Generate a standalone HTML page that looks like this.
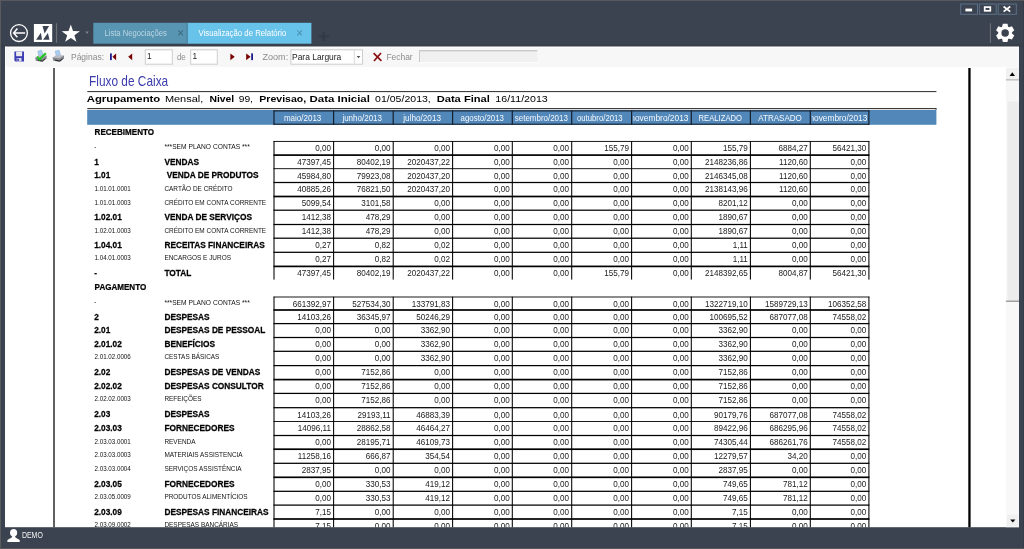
<!DOCTYPE html>
<html lang="pt-BR"><head><meta charset="utf-8"><title>Visualização de Relatório - Fluxo de Caixa</title>
<style>html,body{margin:0;padding:0;background:#3c4350;overflow:hidden}svg{display:block;will-change:transform}text{white-space:pre}</style></head>
<body>
<svg width="1024" height="549" viewBox="0 0 1024 549" font-family="'Liberation Sans', Arial, sans-serif">
<rect x="0.00" y="0.00" width="1024.00" height="549.00" fill="#3c4350" />
<rect x="0.00" y="0.00" width="1024.00" height="1.00" fill="#56585b" />
<rect x="0.00" y="0.00" width="1.00" height="549.00" fill="#5a5b5d" />
<rect x="0.00" y="548.00" width="1024.00" height="1.00" fill="#56585b" />
<rect x="1023.00" y="1.00" width="1.00" height="547.00" fill="#363c47" />
<g id="titlebar">
<circle cx="18.95" cy="33.1" r="8.4" fill="none" stroke="#fff" stroke-width="1.3"/>
<path d="M25.1 32.9H14.2M17.4 28.6L13.6 32.9L17.4 37.2" fill="none" stroke="#fff" stroke-width="1.5"/>
<rect x="33.90" y="24.00" width="18.30" height="18.00" fill="#fff" />
<path d="M42.5 26.1H49.1L44.6 33.6ZM36.1 39.8H42L40.9 32.8ZM43.1 39.8H49.5L47.9 33.1Z" fill="#3c4350"/>
<rect x="55.90" y="23.30" width="1.20" height="19.40" fill="#6b7079" />
<polygon points="70.80,24.50 73.03,31.03 79.93,31.13 74.41,35.27 76.44,41.87 70.80,37.90 65.16,41.87 67.19,35.27 61.67,31.13 68.57,31.03" fill="#fff"/>
<path d="M85.2 31.6H88.9L87.05 33.9Z" fill="#7d838d"/>
<rect x="93.30" y="22.80" width="94.50" height="20.90" fill="#5795b2" />
<rect x="187.80" y="22.80" width="123.60" height="20.90" fill="#68c3ea" />
<rect x="186.20" y="22.80" width="1.60" height="20.90" fill="#4f89a5" />
<text x="104.50" y="36.30" textLength="62.30" lengthAdjust="spacingAndGlyphs" font-size="8.5" fill="#bcd6e3">Lista Negociações</text>
<text x="198.60" y="36.30" textLength="87.70" lengthAdjust="spacingAndGlyphs" font-size="8.5" fill="#fff">Visualização de Relatório</text>
<path d="M178.3 30.4L182.9 35.3M182.9 30.4L178.3 35.3" stroke="#3f6d83" stroke-width="1.1" fill="none"/>
<path d="M297.3 30.4L301.9 35.3M301.9 30.4L297.3 35.3" stroke="#4a94b5" stroke-width="1.1" fill="none"/>
<path d="M323.7 31.6V41.2M318.6 36.4H328.9" stroke="#323a47" stroke-width="2.4" fill="none"/>
<rect x="960.70" y="4" width="16.80" height="10.3" fill="none" stroke="#5b7188" stroke-width="1"/>
<rect x="979.40" y="4" width="16.80" height="10.3" fill="none" stroke="#5b7188" stroke-width="1"/>
<rect x="998.20" y="4" width="18.10" height="10.3" fill="none" stroke="#5b7188" stroke-width="1"/>
<rect x="965.40" y="8.60" width="6.70" height="2.80" fill="#fff" />
<rect x="984.7" y="7.1" width="5.6" height="3.7" fill="none" stroke="#fff" stroke-width="1.7"/>
<path d="M1003.6 6.5L1010.2 11.6M1010.2 6.5L1003.6 11.6" stroke="#fff" stroke-width="1.7" fill="none"/>
<rect x="989.90" y="23.20" width="1.00" height="19.70" fill="#70757c" />
<g transform="translate(1005.15 32.9)">
<circle r="5.3" fill="none" stroke="#fff" stroke-width="3.1"/>
<path d="M-3.1 -5.6L-2.3 -9.15H2.3L3.1 -5.6Z" fill="#fff" transform="rotate(0)"/>
<path d="M-3.1 -5.6L-2.3 -9.15H2.3L3.1 -5.6Z" fill="#fff" transform="rotate(60)"/>
<path d="M-3.1 -5.6L-2.3 -9.15H2.3L3.1 -5.6Z" fill="#fff" transform="rotate(120)"/>
<path d="M-3.1 -5.6L-2.3 -9.15H2.3L3.1 -5.6Z" fill="#fff" transform="rotate(180)"/>
<path d="M-3.1 -5.6L-2.3 -9.15H2.3L3.1 -5.6Z" fill="#fff" transform="rotate(240)"/>
<path d="M-3.1 -5.6L-2.3 -9.15H2.3L3.1 -5.6Z" fill="#fff" transform="rotate(300)"/>
</g>
</g>
<g id="toolbar">
<rect x="1.00" y="44.40" width="1022.00" height="2.40" fill="#383f4a" />
<rect x="5.00" y="46.70" width="1014.00" height="20.30" fill="#f7f7f7" />
<rect x="5.00" y="46.70" width="1014.00" height="1.10" fill="#fefefe" />
<rect x="5.00" y="46.70" width="0.90" height="20.30" fill="#fefefe" />
<g transform="translate(14.1 51)">
<path d="M0.3 0.6H9.9V10.4H1.3L0.3 9.4Z" fill="#3c3cb4"/>
<rect x="2" y="0.6" width="6" height="4.6" fill="#e9e9ee"/>
<rect x="2.6" y="7" width="4.8" height="3.4" fill="#d8d8e8"/>
<rect x="3.2" y="7.6" width="1.5" height="2.4" fill="#3c3cb4"/>
</g>
<g transform="translate(34.6 50)">
<path d="M3.2 1.2L7 0.2L8.6 5.6L4.4 6.6Z" fill="#a9cdf0" stroke="#7da7d4" stroke-width="0.5"/>
<path d="M0.6 7.6L4 5.2L11.6 5.2L12 8.4L8 11.8L1.4 10.8Z" fill="#b9bcc2"/>
<path d="M0.6 7.6L7.4 8.6L12 5.6L12 8.4L8 11.8L1.4 10.8Z" fill="#83868c"/>
<path d="M3 10.2L7.8 11L10.6 8.8" stroke="#2a2a2a" stroke-width="1" fill="none"/>
<path d="M2.6 6.6L5 9.4L11.2 3.2" stroke="#22c322" stroke-width="2.2" fill="none"/>
</g>
<g transform="translate(52.0 50)">
<path d="M3.2 1.2L7 0.2L8.6 5.6L4.4 6.6Z" fill="#a9cdf0" stroke="#7da7d4" stroke-width="0.5"/>
<path d="M0.6 7.6L4 5.2L11.6 5.2L12 8.4L8 11.8L1.4 10.8Z" fill="#b9bcc2"/>
<path d="M0.6 7.6L7.4 8.6L12 5.6L12 8.4L8 11.8L1.4 10.8Z" fill="#83868c"/>
<path d="M3 10.2L7.8 11L10.6 8.8" stroke="#2a2a2a" stroke-width="1" fill="none"/>
</g>
<text x="71.00" y="60.20" textLength="33.00" lengthAdjust="spacingAndGlyphs" font-size="9" fill="#8c8c8c">Páginas:</text>
<rect x="110.00" y="53.40" width="1.80" height="6.70" fill="#1c1c8c" />
<path d="M112.4 56.8L116.1 53.4V60.2Z" fill="#7a0000"/>
<path d="M128.2 56.8L132.2 53.4V60.2Z" fill="#7a0000"/>
<rect x="145.30" y="49.8" width="27.00" height="14.4" fill="#fff" stroke="#cdcdcd" stroke-width="1"/>
<text transform="translate(147.00 59.40) scale(0.9 1)" font-size="9.2" fill="#222">1</text>
<text x="176.90" y="60.20" textLength="8.80" lengthAdjust="spacingAndGlyphs" font-size="9" fill="#8c8c8c">de</text>
<rect x="190.70" y="49.8" width="26.60" height="14.4" fill="#fff" stroke="#cdcdcd" stroke-width="1"/>
<text transform="translate(192.40 59.40) scale(0.9 1)" font-size="9.2" fill="#222">1</text>
<path d="M234.7 56.8L230.4 53.4V60.2Z" fill="#7a0000"/>
<path d="M250.6 56.8L246.2 53.4V60.2Z" fill="#7a0000"/>
<rect x="251.20" y="53.40" width="1.80" height="6.70" fill="#1c1c8c" />
<text x="262.40" y="60.20" textLength="25.80" lengthAdjust="spacingAndGlyphs" font-size="9" fill="#8c8c8c">Zoom:</text>
<rect x="290.9" y="49.8" width="71.6" height="14.4" fill="#fff" stroke="#cdcdcd" stroke-width="1"/>
<rect x="353.80" y="50.30" width="0.80" height="13.40" fill="#d0d0d0" />
<path d="M356.6 55.9H360.4L358.5 58.2Z" fill="#555"/>
<text x="292.00" y="59.80" textLength="49.30" lengthAdjust="spacingAndGlyphs" font-size="9" fill="#222">Para Largura</text>
<path d="M373.6 53.2L381.4 60.8M381 53L374 61" stroke="#8a1010" stroke-width="1.7" fill="none"/>
<text x="386.40" y="60.20" textLength="26.30" lengthAdjust="spacingAndGlyphs" font-size="9" fill="#8c8c8c">Fechar</text>
<rect x="419.00" y="50.20" width="118.30" height="12.10" fill="#f0f0f0" />
<rect x="419.00" y="50.00" width="118.30" height="1.40" fill="#c9c9c9" />
<rect x="419.00" y="50.00" width="1.00" height="12.30" fill="#c9c9c9" />
<rect x="419.00" y="62.30" width="119.00" height="0.90" fill="#fff" />
</g>
<g id="report">
<rect x="5.00" y="67.00" width="1014.00" height="460.20" fill="#fff" />
<clipPath id="cc"><rect x="5" y="67" width="1001" height="460.2"/></clipPath>
<g clip-path="url(#cc)">
<rect x="53.20" y="68.00" width="1.60" height="460.00" fill="#3a3a3a"/>
<rect x="968.30" y="68.00" width="2.30" height="460.00" fill="#000"/>
<text x="89.00" y="85.80" textLength="79.20" lengthAdjust="spacingAndGlyphs" font-size="14.6" fill="#3c3cae">Fluxo de Caixa</text>
<rect x="87.30" y="91.10" width="849.10" height="1.00" fill="#2a2a2a"/>
<text x="86.80" y="102.10" textLength="73.40" lengthAdjust="spacingAndGlyphs" font-size="9.6" fill="#000" font-weight="bold">Agrupamento</text>
<text x="164.90" y="102.10" textLength="38.40" lengthAdjust="spacingAndGlyphs" font-size="9.6" fill="#000">Mensal,</text>
<text x="209.40" y="102.10" textLength="24.80" lengthAdjust="spacingAndGlyphs" font-size="9.6" fill="#000" font-weight="bold">Nivel</text>
<text x="238.70" y="102.10" textLength="14.30" lengthAdjust="spacingAndGlyphs" font-size="9.6" fill="#000">99,</text>
<text x="259.30" y="102.10" textLength="46.90" lengthAdjust="spacingAndGlyphs" font-size="9.6" fill="#000" font-weight="bold">Previsao,</text>
<text x="309.60" y="102.10" textLength="60.30" lengthAdjust="spacingAndGlyphs" font-size="9.6" fill="#000" font-weight="bold">Data Inicial</text>
<text x="375.10" y="102.10" textLength="55.70" lengthAdjust="spacingAndGlyphs" font-size="9.6" fill="#000">01/05/2013,</text>
<text x="436.70" y="102.10" textLength="53.20" lengthAdjust="spacingAndGlyphs" font-size="9.6" fill="#000" font-weight="bold">Data Final</text>
<text x="495.30" y="102.10" textLength="52.50" lengthAdjust="spacingAndGlyphs" font-size="9.6" fill="#000">16/11/2013</text>
<rect x="87.30" y="108.05" width="849.10" height="1.10" fill="#333"/>
<rect x="935.60" y="108.10" width="0.80" height="1.90" fill="#333" />
<rect x="87.20" y="110.00" width="849.20" height="14.80" fill="#5287b9" />
<text x="283.90" y="121.40" textLength="37.40" lengthAdjust="spacingAndGlyphs" font-size="9" fill="#f6f9fc">maio/2013</text>
<text x="342.40" y="121.40" textLength="39.60" lengthAdjust="spacingAndGlyphs" font-size="9" fill="#f6f9fc">junho/2013</text>
<text x="403.30" y="121.40" textLength="37.70" lengthAdjust="spacingAndGlyphs" font-size="9" fill="#f6f9fc">julho/2013</text>
<text x="460.50" y="121.40" textLength="43.50" lengthAdjust="spacingAndGlyphs" font-size="9" fill="#f6f9fc">agosto/2013</text>
<text x="514.80" y="121.40" textLength="53.10" lengthAdjust="spacingAndGlyphs" font-size="9" fill="#f6f9fc">setembro/2013</text>
<text x="577.00" y="121.40" textLength="45.60" lengthAdjust="spacingAndGlyphs" font-size="9" fill="#f6f9fc">outubro/2013</text>
<clipPath id="h6"><rect x="633.10" y="110" width="57.40" height="15"/></clipPath>
<g clip-path="url(#h6)">
<text x="630.30" y="121.40" textLength="58.20" lengthAdjust="spacingAndGlyphs" font-size="9" fill="#f6f9fc">novembro/2013</text>
</g>
<text x="698.60" y="121.40" textLength="43.40" lengthAdjust="spacingAndGlyphs" font-size="9" fill="#f6f9fc">REALIZADO</text>
<text x="758.20" y="121.40" textLength="43.70" lengthAdjust="spacingAndGlyphs" font-size="9" fill="#f6f9fc">ATRASADO</text>
<clipPath id="h9"><rect x="811.80" y="110" width="56.30" height="15"/></clipPath>
<g clip-path="url(#h9)">
<text x="809.40" y="121.40" textLength="57.90" lengthAdjust="spacingAndGlyphs" font-size="9" fill="#f6f9fc">novembro/2013</text>
</g>
<rect x="273.50" y="110.35" width="595.90" height="1.10" fill="#15202e"/>
<rect x="273.50" y="123.65" width="595.90" height="1.10" fill="#15202e"/>
<rect x="273.40" y="110.40" width="1.20" height="14.30" fill="#15202e"/>
<rect x="333.00" y="110.40" width="1.20" height="14.30" fill="#15202e"/>
<rect x="392.60" y="110.40" width="1.20" height="14.30" fill="#15202e"/>
<rect x="452.00" y="110.40" width="1.20" height="14.30" fill="#15202e"/>
<rect x="511.70" y="110.40" width="1.20" height="14.30" fill="#15202e"/>
<rect x="571.10" y="110.40" width="1.20" height="14.30" fill="#15202e"/>
<rect x="631.00" y="110.40" width="1.20" height="14.30" fill="#15202e"/>
<rect x="690.70" y="110.40" width="1.20" height="14.30" fill="#15202e"/>
<rect x="749.80" y="110.40" width="1.20" height="14.30" fill="#15202e"/>
<rect x="809.70" y="110.40" width="1.20" height="14.30" fill="#15202e"/>
<rect x="868.30" y="110.40" width="1.20" height="14.30" fill="#15202e"/>
<text transform="translate(94.60 135.10) scale(0.85 1)" font-size="9.5" fill="#000" font-weight="bold" stroke="#000" stroke-width="0.25">RECEBIMENTO</text>
<text transform="translate(94.20 148.70) scale(0.83 1)" font-size="7.5" fill="#111">-</text>
<text x="164.40" y="149.20" textLength="85.40" lengthAdjust="spacingAndGlyphs" font-size="7.5" fill="#111">***SEM PLANO CONTAS ***</text>
<text transform="translate(331.00 151.20) scale(0.9 1)" font-size="9" fill="#1a1a1a" text-anchor="end">0,00</text>
<text transform="translate(390.60 151.20) scale(0.9 1)" font-size="9" fill="#1a1a1a" text-anchor="end">0,00</text>
<text transform="translate(450.00 151.20) scale(0.9 1)" font-size="9" fill="#1a1a1a" text-anchor="end">0,00</text>
<text transform="translate(509.70 151.20) scale(0.9 1)" font-size="9" fill="#1a1a1a" text-anchor="end">0,00</text>
<text transform="translate(569.10 151.20) scale(0.9 1)" font-size="9" fill="#1a1a1a" text-anchor="end">0,00</text>
<text transform="translate(629.00 151.20) scale(0.9 1)" font-size="9" fill="#1a1a1a" text-anchor="end">155,79</text>
<text transform="translate(688.70 151.20) scale(0.9 1)" font-size="9" fill="#1a1a1a" text-anchor="end">0,00</text>
<text transform="translate(747.80 151.20) scale(0.9 1)" font-size="9" fill="#1a1a1a" text-anchor="end">155,79</text>
<text transform="translate(807.70 151.20) scale(0.9 1)" font-size="9" fill="#1a1a1a" text-anchor="end">6884,27</text>
<text transform="translate(866.30 151.20) scale(0.9 1)" font-size="9" fill="#1a1a1a" text-anchor="end">56421,30</text>
<text transform="translate(94.20 164.75) scale(0.87 1)" font-size="9.5" fill="#000" font-weight="bold" stroke="#000" stroke-width="0.25">1</text>
<text transform="translate(164.40 164.75) scale(0.875 1)" font-size="9.5" fill="#000" font-weight="bold" stroke="#000" stroke-width="0.25" xml:space="preserve">VENDAS</text>
<text transform="translate(331.00 164.90) scale(0.9 1)" font-size="9" fill="#1a1a1a" text-anchor="end">47397,45</text>
<text transform="translate(390.60 164.90) scale(0.9 1)" font-size="9" fill="#1a1a1a" text-anchor="end">80402,19</text>
<text transform="translate(450.00 164.90) scale(0.9 1)" font-size="9" fill="#1a1a1a" text-anchor="end">2020437,22</text>
<text transform="translate(509.70 164.90) scale(0.9 1)" font-size="9" fill="#1a1a1a" text-anchor="end">0,00</text>
<text transform="translate(569.10 164.90) scale(0.9 1)" font-size="9" fill="#1a1a1a" text-anchor="end">0,00</text>
<text transform="translate(629.00 164.90) scale(0.9 1)" font-size="9" fill="#1a1a1a" text-anchor="end">0,00</text>
<text transform="translate(688.70 164.90) scale(0.9 1)" font-size="9" fill="#1a1a1a" text-anchor="end">0,00</text>
<text transform="translate(747.80 164.90) scale(0.9 1)" font-size="9" fill="#1a1a1a" text-anchor="end">2148236,86</text>
<text transform="translate(807.70 164.90) scale(0.9 1)" font-size="9" fill="#1a1a1a" text-anchor="end">1120,60</text>
<text transform="translate(866.30 164.90) scale(0.9 1)" font-size="9" fill="#1a1a1a" text-anchor="end">0,00</text>
<text transform="translate(94.20 178.35) scale(0.87 1)" font-size="9.5" fill="#000" font-weight="bold" stroke="#000" stroke-width="0.25">1.01</text>
<text transform="translate(164.40 178.35) scale(0.875 1)" font-size="9.5" fill="#000" font-weight="bold" stroke="#000" stroke-width="0.25" xml:space="preserve"> VENDA DE PRODUTOS</text>
<text transform="translate(331.00 178.50) scale(0.9 1)" font-size="9" fill="#1a1a1a" text-anchor="end">45984,80</text>
<text transform="translate(390.60 178.50) scale(0.9 1)" font-size="9" fill="#1a1a1a" text-anchor="end">79923,08</text>
<text transform="translate(450.00 178.50) scale(0.9 1)" font-size="9" fill="#1a1a1a" text-anchor="end">2020437,20</text>
<text transform="translate(509.70 178.50) scale(0.9 1)" font-size="9" fill="#1a1a1a" text-anchor="end">0,00</text>
<text transform="translate(569.10 178.50) scale(0.9 1)" font-size="9" fill="#1a1a1a" text-anchor="end">0,00</text>
<text transform="translate(629.00 178.50) scale(0.9 1)" font-size="9" fill="#1a1a1a" text-anchor="end">0,00</text>
<text transform="translate(688.70 178.50) scale(0.9 1)" font-size="9" fill="#1a1a1a" text-anchor="end">0,00</text>
<text transform="translate(747.80 178.50) scale(0.9 1)" font-size="9" fill="#1a1a1a" text-anchor="end">2146345,08</text>
<text transform="translate(807.70 178.50) scale(0.9 1)" font-size="9" fill="#1a1a1a" text-anchor="end">1120,60</text>
<text transform="translate(866.30 178.50) scale(0.9 1)" font-size="9" fill="#1a1a1a" text-anchor="end">0,00</text>
<text transform="translate(94.50 190.50) scale(0.83 1)" font-size="7.5" fill="#111">1.01.01.0001</text>
<text transform="translate(164.40 190.50) scale(0.86 1)" font-size="7.5" fill="#111">CARTÃO DE CRÉDITO</text>
<text transform="translate(331.00 192.30) scale(0.9 1)" font-size="9" fill="#1a1a1a" text-anchor="end">40885,26</text>
<text transform="translate(390.60 192.30) scale(0.9 1)" font-size="9" fill="#1a1a1a" text-anchor="end">76821,50</text>
<text transform="translate(450.00 192.30) scale(0.9 1)" font-size="9" fill="#1a1a1a" text-anchor="end">2020437,20</text>
<text transform="translate(509.70 192.30) scale(0.9 1)" font-size="9" fill="#1a1a1a" text-anchor="end">0,00</text>
<text transform="translate(569.10 192.30) scale(0.9 1)" font-size="9" fill="#1a1a1a" text-anchor="end">0,00</text>
<text transform="translate(629.00 192.30) scale(0.9 1)" font-size="9" fill="#1a1a1a" text-anchor="end">0,00</text>
<text transform="translate(688.70 192.30) scale(0.9 1)" font-size="9" fill="#1a1a1a" text-anchor="end">0,00</text>
<text transform="translate(747.80 192.30) scale(0.9 1)" font-size="9" fill="#1a1a1a" text-anchor="end">2138143,96</text>
<text transform="translate(807.70 192.30) scale(0.9 1)" font-size="9" fill="#1a1a1a" text-anchor="end">1120,60</text>
<text transform="translate(866.30 192.30) scale(0.9 1)" font-size="9" fill="#1a1a1a" text-anchor="end">0,00</text>
<text transform="translate(94.50 204.50) scale(0.83 1)" font-size="7.5" fill="#111">1.01.01.0003</text>
<text transform="translate(164.40 204.50) scale(0.86 1)" font-size="7.5" fill="#111">CRÉDITO EM CONTA CORRENTE</text>
<text transform="translate(331.00 206.30) scale(0.9 1)" font-size="9" fill="#1a1a1a" text-anchor="end">5099,54</text>
<text transform="translate(390.60 206.30) scale(0.9 1)" font-size="9" fill="#1a1a1a" text-anchor="end">3101,58</text>
<text transform="translate(450.00 206.30) scale(0.9 1)" font-size="9" fill="#1a1a1a" text-anchor="end">0,00</text>
<text transform="translate(509.70 206.30) scale(0.9 1)" font-size="9" fill="#1a1a1a" text-anchor="end">0,00</text>
<text transform="translate(569.10 206.30) scale(0.9 1)" font-size="9" fill="#1a1a1a" text-anchor="end">0,00</text>
<text transform="translate(629.00 206.30) scale(0.9 1)" font-size="9" fill="#1a1a1a" text-anchor="end">0,00</text>
<text transform="translate(688.70 206.30) scale(0.9 1)" font-size="9" fill="#1a1a1a" text-anchor="end">0,00</text>
<text transform="translate(747.80 206.30) scale(0.9 1)" font-size="9" fill="#1a1a1a" text-anchor="end">8201,12</text>
<text transform="translate(807.70 206.30) scale(0.9 1)" font-size="9" fill="#1a1a1a" text-anchor="end">0,00</text>
<text transform="translate(866.30 206.30) scale(0.9 1)" font-size="9" fill="#1a1a1a" text-anchor="end">0,00</text>
<text transform="translate(94.20 219.85) scale(0.87 1)" font-size="9.5" fill="#000" font-weight="bold" stroke="#000" stroke-width="0.25">1.02.01</text>
<text transform="translate(164.40 219.85) scale(0.875 1)" font-size="9.5" fill="#000" font-weight="bold" stroke="#000" stroke-width="0.25" xml:space="preserve">VENDA DE SERVIÇOS</text>
<text transform="translate(331.00 220.00) scale(0.9 1)" font-size="9" fill="#1a1a1a" text-anchor="end">1412,38</text>
<text transform="translate(390.60 220.00) scale(0.9 1)" font-size="9" fill="#1a1a1a" text-anchor="end">478,29</text>
<text transform="translate(450.00 220.00) scale(0.9 1)" font-size="9" fill="#1a1a1a" text-anchor="end">0,00</text>
<text transform="translate(509.70 220.00) scale(0.9 1)" font-size="9" fill="#1a1a1a" text-anchor="end">0,00</text>
<text transform="translate(569.10 220.00) scale(0.9 1)" font-size="9" fill="#1a1a1a" text-anchor="end">0,00</text>
<text transform="translate(629.00 220.00) scale(0.9 1)" font-size="9" fill="#1a1a1a" text-anchor="end">0,00</text>
<text transform="translate(688.70 220.00) scale(0.9 1)" font-size="9" fill="#1a1a1a" text-anchor="end">0,00</text>
<text transform="translate(747.80 220.00) scale(0.9 1)" font-size="9" fill="#1a1a1a" text-anchor="end">1890,67</text>
<text transform="translate(807.70 220.00) scale(0.9 1)" font-size="9" fill="#1a1a1a" text-anchor="end">0,00</text>
<text transform="translate(866.30 220.00) scale(0.9 1)" font-size="9" fill="#1a1a1a" text-anchor="end">0,00</text>
<text transform="translate(94.50 232.50) scale(0.83 1)" font-size="7.5" fill="#111">1.02.01.0003</text>
<text transform="translate(164.40 232.50) scale(0.86 1)" font-size="7.5" fill="#111">CRÉDITO EM CONTA CORRENTE</text>
<text transform="translate(331.00 234.30) scale(0.9 1)" font-size="9" fill="#1a1a1a" text-anchor="end">1412,38</text>
<text transform="translate(390.60 234.30) scale(0.9 1)" font-size="9" fill="#1a1a1a" text-anchor="end">478,29</text>
<text transform="translate(450.00 234.30) scale(0.9 1)" font-size="9" fill="#1a1a1a" text-anchor="end">0,00</text>
<text transform="translate(509.70 234.30) scale(0.9 1)" font-size="9" fill="#1a1a1a" text-anchor="end">0,00</text>
<text transform="translate(569.10 234.30) scale(0.9 1)" font-size="9" fill="#1a1a1a" text-anchor="end">0,00</text>
<text transform="translate(629.00 234.30) scale(0.9 1)" font-size="9" fill="#1a1a1a" text-anchor="end">0,00</text>
<text transform="translate(688.70 234.30) scale(0.9 1)" font-size="9" fill="#1a1a1a" text-anchor="end">0,00</text>
<text transform="translate(747.80 234.30) scale(0.9 1)" font-size="9" fill="#1a1a1a" text-anchor="end">1890,67</text>
<text transform="translate(807.70 234.30) scale(0.9 1)" font-size="9" fill="#1a1a1a" text-anchor="end">0,00</text>
<text transform="translate(866.30 234.30) scale(0.9 1)" font-size="9" fill="#1a1a1a" text-anchor="end">0,00</text>
<text transform="translate(94.20 247.85) scale(0.87 1)" font-size="9.5" fill="#000" font-weight="bold" stroke="#000" stroke-width="0.25">1.04.01</text>
<text transform="translate(164.40 247.85) scale(0.875 1)" font-size="9.5" fill="#000" font-weight="bold" stroke="#000" stroke-width="0.25" xml:space="preserve">RECEITAS FINANCEIRAS</text>
<text transform="translate(331.00 248.00) scale(0.9 1)" font-size="9" fill="#1a1a1a" text-anchor="end">0,27</text>
<text transform="translate(390.60 248.00) scale(0.9 1)" font-size="9" fill="#1a1a1a" text-anchor="end">0,82</text>
<text transform="translate(450.00 248.00) scale(0.9 1)" font-size="9" fill="#1a1a1a" text-anchor="end">0,02</text>
<text transform="translate(509.70 248.00) scale(0.9 1)" font-size="9" fill="#1a1a1a" text-anchor="end">0,00</text>
<text transform="translate(569.10 248.00) scale(0.9 1)" font-size="9" fill="#1a1a1a" text-anchor="end">0,00</text>
<text transform="translate(629.00 248.00) scale(0.9 1)" font-size="9" fill="#1a1a1a" text-anchor="end">0,00</text>
<text transform="translate(688.70 248.00) scale(0.9 1)" font-size="9" fill="#1a1a1a" text-anchor="end">0,00</text>
<text transform="translate(747.80 248.00) scale(0.9 1)" font-size="9" fill="#1a1a1a" text-anchor="end">1,11</text>
<text transform="translate(807.70 248.00) scale(0.9 1)" font-size="9" fill="#1a1a1a" text-anchor="end">0,00</text>
<text transform="translate(866.30 248.00) scale(0.9 1)" font-size="9" fill="#1a1a1a" text-anchor="end">0,00</text>
<text transform="translate(94.50 260.30) scale(0.83 1)" font-size="7.5" fill="#111">1.04.01.0003</text>
<text transform="translate(164.40 260.30) scale(0.86 1)" font-size="7.5" fill="#111">ENCARGOS E JUROS</text>
<text transform="translate(331.00 262.10) scale(0.9 1)" font-size="9" fill="#1a1a1a" text-anchor="end">0,27</text>
<text transform="translate(390.60 262.10) scale(0.9 1)" font-size="9" fill="#1a1a1a" text-anchor="end">0,82</text>
<text transform="translate(450.00 262.10) scale(0.9 1)" font-size="9" fill="#1a1a1a" text-anchor="end">0,02</text>
<text transform="translate(509.70 262.10) scale(0.9 1)" font-size="9" fill="#1a1a1a" text-anchor="end">0,00</text>
<text transform="translate(569.10 262.10) scale(0.9 1)" font-size="9" fill="#1a1a1a" text-anchor="end">0,00</text>
<text transform="translate(629.00 262.10) scale(0.9 1)" font-size="9" fill="#1a1a1a" text-anchor="end">0,00</text>
<text transform="translate(688.70 262.10) scale(0.9 1)" font-size="9" fill="#1a1a1a" text-anchor="end">0,00</text>
<text transform="translate(747.80 262.10) scale(0.9 1)" font-size="9" fill="#1a1a1a" text-anchor="end">1,11</text>
<text transform="translate(807.70 262.10) scale(0.9 1)" font-size="9" fill="#1a1a1a" text-anchor="end">0,00</text>
<text transform="translate(866.30 262.10) scale(0.9 1)" font-size="9" fill="#1a1a1a" text-anchor="end">0,00</text>
<text transform="translate(94.20 276.05) scale(0.87 1)" font-size="9.5" fill="#000" font-weight="bold" stroke="#000" stroke-width="0.25">-</text>
<text transform="translate(164.40 276.05) scale(0.875 1)" font-size="9.5" fill="#000" font-weight="bold" stroke="#000" stroke-width="0.25" xml:space="preserve">TOTAL</text>
<text transform="translate(331.00 276.20) scale(0.9 1)" font-size="9" fill="#1a1a1a" text-anchor="end">47397,45</text>
<text transform="translate(390.60 276.20) scale(0.9 1)" font-size="9" fill="#1a1a1a" text-anchor="end">80402,19</text>
<text transform="translate(450.00 276.20) scale(0.9 1)" font-size="9" fill="#1a1a1a" text-anchor="end">2020437,22</text>
<text transform="translate(509.70 276.20) scale(0.9 1)" font-size="9" fill="#1a1a1a" text-anchor="end">0,00</text>
<text transform="translate(569.10 276.20) scale(0.9 1)" font-size="9" fill="#1a1a1a" text-anchor="end">0,00</text>
<text transform="translate(629.00 276.20) scale(0.9 1)" font-size="9" fill="#1a1a1a" text-anchor="end">155,79</text>
<text transform="translate(688.70 276.20) scale(0.9 1)" font-size="9" fill="#1a1a1a" text-anchor="end">0,00</text>
<text transform="translate(747.80 276.20) scale(0.9 1)" font-size="9" fill="#1a1a1a" text-anchor="end">2148392,65</text>
<text transform="translate(807.70 276.20) scale(0.9 1)" font-size="9" fill="#1a1a1a" text-anchor="end">8004,87</text>
<text transform="translate(866.30 276.20) scale(0.9 1)" font-size="9" fill="#1a1a1a" text-anchor="end">56421,30</text>
<rect x="273.50" y="140.95" width="595.90" height="0.90" fill="#000"/>
<rect x="273.50" y="154.25" width="595.90" height="1.70" fill="#000"/>
<rect x="273.50" y="168.25" width="595.90" height="0.90" fill="#000"/>
<rect x="273.50" y="181.88" width="595.90" height="1.25" fill="#000"/>
<rect x="273.50" y="195.65" width="595.90" height="1.70" fill="#000"/>
<rect x="273.50" y="209.58" width="595.90" height="1.25" fill="#000"/>
<rect x="273.50" y="223.88" width="595.90" height="1.25" fill="#000"/>
<rect x="273.50" y="237.58" width="595.90" height="1.25" fill="#000"/>
<rect x="273.50" y="251.68" width="595.90" height="1.25" fill="#000"/>
<rect x="273.50" y="265.55" width="595.90" height="1.70" fill="#000"/>
<rect x="273.48" y="141.10" width="1.05" height="138.50" fill="#000"/>
<rect x="333.08" y="141.10" width="1.05" height="138.50" fill="#000"/>
<rect x="392.68" y="141.10" width="1.05" height="138.50" fill="#000"/>
<rect x="452.08" y="141.10" width="1.05" height="138.50" fill="#000"/>
<rect x="511.77" y="141.10" width="1.05" height="138.50" fill="#000"/>
<rect x="571.18" y="141.10" width="1.05" height="138.50" fill="#000"/>
<rect x="631.08" y="141.10" width="1.05" height="138.50" fill="#000"/>
<rect x="690.77" y="141.10" width="1.05" height="138.50" fill="#000"/>
<rect x="749.88" y="141.10" width="1.05" height="138.50" fill="#000"/>
<rect x="809.77" y="141.10" width="1.05" height="138.50" fill="#000"/>
<rect x="868.38" y="141.10" width="1.05" height="138.50" fill="#000"/>
<text transform="translate(94.60 290.20) scale(0.85 1)" font-size="9.5" fill="#000" font-weight="bold" stroke="#000" stroke-width="0.25">PAGAMENTO</text>
<text transform="translate(94.20 304.30) scale(0.83 1)" font-size="7.5" fill="#111">-</text>
<text x="164.40" y="304.80" textLength="85.40" lengthAdjust="spacingAndGlyphs" font-size="7.5" fill="#111">***SEM PLANO CONTAS ***</text>
<text transform="translate(331.00 306.80) scale(0.9 1)" font-size="9" fill="#1a1a1a" text-anchor="end">661392,97</text>
<text transform="translate(390.60 306.80) scale(0.9 1)" font-size="9" fill="#1a1a1a" text-anchor="end">527534,30</text>
<text transform="translate(450.00 306.80) scale(0.9 1)" font-size="9" fill="#1a1a1a" text-anchor="end">133791,83</text>
<text transform="translate(509.70 306.80) scale(0.9 1)" font-size="9" fill="#1a1a1a" text-anchor="end">0,00</text>
<text transform="translate(569.10 306.80) scale(0.9 1)" font-size="9" fill="#1a1a1a" text-anchor="end">0,00</text>
<text transform="translate(629.00 306.80) scale(0.9 1)" font-size="9" fill="#1a1a1a" text-anchor="end">0,00</text>
<text transform="translate(688.70 306.80) scale(0.9 1)" font-size="9" fill="#1a1a1a" text-anchor="end">0,00</text>
<text transform="translate(747.80 306.80) scale(0.9 1)" font-size="9" fill="#1a1a1a" text-anchor="end">1322719,10</text>
<text transform="translate(807.70 306.80) scale(0.9 1)" font-size="9" fill="#1a1a1a" text-anchor="end">1589729,13</text>
<text transform="translate(866.30 306.80) scale(0.9 1)" font-size="9" fill="#1a1a1a" text-anchor="end">106352,58</text>
<text transform="translate(94.20 319.65) scale(0.87 1)" font-size="9.5" fill="#000" font-weight="bold" stroke="#000" stroke-width="0.25">2</text>
<text transform="translate(164.40 319.65) scale(0.875 1)" font-size="9.5" fill="#000" font-weight="bold" stroke="#000" stroke-width="0.25" xml:space="preserve">DESPESAS</text>
<text transform="translate(331.00 319.80) scale(0.9 1)" font-size="9" fill="#1a1a1a" text-anchor="end">14103,26</text>
<text transform="translate(390.60 319.80) scale(0.9 1)" font-size="9" fill="#1a1a1a" text-anchor="end">36345,97</text>
<text transform="translate(450.00 319.80) scale(0.9 1)" font-size="9" fill="#1a1a1a" text-anchor="end">50246,29</text>
<text transform="translate(509.70 319.80) scale(0.9 1)" font-size="9" fill="#1a1a1a" text-anchor="end">0,00</text>
<text transform="translate(569.10 319.80) scale(0.9 1)" font-size="9" fill="#1a1a1a" text-anchor="end">0,00</text>
<text transform="translate(629.00 319.80) scale(0.9 1)" font-size="9" fill="#1a1a1a" text-anchor="end">0,00</text>
<text transform="translate(688.70 319.80) scale(0.9 1)" font-size="9" fill="#1a1a1a" text-anchor="end">0,00</text>
<text transform="translate(747.80 319.80) scale(0.9 1)" font-size="9" fill="#1a1a1a" text-anchor="end">100695,52</text>
<text transform="translate(807.70 319.80) scale(0.9 1)" font-size="9" fill="#1a1a1a" text-anchor="end">687077,08</text>
<text transform="translate(866.30 319.80) scale(0.9 1)" font-size="9" fill="#1a1a1a" text-anchor="end">74558,02</text>
<text transform="translate(94.20 333.25) scale(0.87 1)" font-size="9.5" fill="#000" font-weight="bold" stroke="#000" stroke-width="0.25">2.01</text>
<text transform="translate(164.40 333.25) scale(0.875 1)" font-size="9.5" fill="#000" font-weight="bold" stroke="#000" stroke-width="0.25" xml:space="preserve">DESPESAS DE PESSOAL</text>
<text transform="translate(331.00 333.40) scale(0.9 1)" font-size="9" fill="#1a1a1a" text-anchor="end">0,00</text>
<text transform="translate(390.60 333.40) scale(0.9 1)" font-size="9" fill="#1a1a1a" text-anchor="end">0,00</text>
<text transform="translate(450.00 333.40) scale(0.9 1)" font-size="9" fill="#1a1a1a" text-anchor="end">3362,90</text>
<text transform="translate(509.70 333.40) scale(0.9 1)" font-size="9" fill="#1a1a1a" text-anchor="end">0,00</text>
<text transform="translate(569.10 333.40) scale(0.9 1)" font-size="9" fill="#1a1a1a" text-anchor="end">0,00</text>
<text transform="translate(629.00 333.40) scale(0.9 1)" font-size="9" fill="#1a1a1a" text-anchor="end">0,00</text>
<text transform="translate(688.70 333.40) scale(0.9 1)" font-size="9" fill="#1a1a1a" text-anchor="end">0,00</text>
<text transform="translate(747.80 333.40) scale(0.9 1)" font-size="9" fill="#1a1a1a" text-anchor="end">3362,90</text>
<text transform="translate(807.70 333.40) scale(0.9 1)" font-size="9" fill="#1a1a1a" text-anchor="end">0,00</text>
<text transform="translate(866.30 333.40) scale(0.9 1)" font-size="9" fill="#1a1a1a" text-anchor="end">0,00</text>
<text transform="translate(94.20 347.15) scale(0.87 1)" font-size="9.5" fill="#000" font-weight="bold" stroke="#000" stroke-width="0.25">2.01.02</text>
<text transform="translate(164.40 347.15) scale(0.875 1)" font-size="9.5" fill="#000" font-weight="bold" stroke="#000" stroke-width="0.25" xml:space="preserve">BENEFÍCIOS</text>
<text transform="translate(331.00 347.30) scale(0.9 1)" font-size="9" fill="#1a1a1a" text-anchor="end">0,00</text>
<text transform="translate(390.60 347.30) scale(0.9 1)" font-size="9" fill="#1a1a1a" text-anchor="end">0,00</text>
<text transform="translate(450.00 347.30) scale(0.9 1)" font-size="9" fill="#1a1a1a" text-anchor="end">3362,90</text>
<text transform="translate(509.70 347.30) scale(0.9 1)" font-size="9" fill="#1a1a1a" text-anchor="end">0,00</text>
<text transform="translate(569.10 347.30) scale(0.9 1)" font-size="9" fill="#1a1a1a" text-anchor="end">0,00</text>
<text transform="translate(629.00 347.30) scale(0.9 1)" font-size="9" fill="#1a1a1a" text-anchor="end">0,00</text>
<text transform="translate(688.70 347.30) scale(0.9 1)" font-size="9" fill="#1a1a1a" text-anchor="end">0,00</text>
<text transform="translate(747.80 347.30) scale(0.9 1)" font-size="9" fill="#1a1a1a" text-anchor="end">3362,90</text>
<text transform="translate(807.70 347.30) scale(0.9 1)" font-size="9" fill="#1a1a1a" text-anchor="end">0,00</text>
<text transform="translate(866.30 347.30) scale(0.9 1)" font-size="9" fill="#1a1a1a" text-anchor="end">0,00</text>
<text transform="translate(94.50 359.30) scale(0.83 1)" font-size="7.5" fill="#111">2.01.02.0006</text>
<text transform="translate(164.40 359.30) scale(0.86 1)" font-size="7.5" fill="#111">CESTAS BÁSICAS</text>
<text transform="translate(331.00 361.10) scale(0.9 1)" font-size="9" fill="#1a1a1a" text-anchor="end">0,00</text>
<text transform="translate(390.60 361.10) scale(0.9 1)" font-size="9" fill="#1a1a1a" text-anchor="end">0,00</text>
<text transform="translate(450.00 361.10) scale(0.9 1)" font-size="9" fill="#1a1a1a" text-anchor="end">3362,90</text>
<text transform="translate(509.70 361.10) scale(0.9 1)" font-size="9" fill="#1a1a1a" text-anchor="end">0,00</text>
<text transform="translate(569.10 361.10) scale(0.9 1)" font-size="9" fill="#1a1a1a" text-anchor="end">0,00</text>
<text transform="translate(629.00 361.10) scale(0.9 1)" font-size="9" fill="#1a1a1a" text-anchor="end">0,00</text>
<text transform="translate(688.70 361.10) scale(0.9 1)" font-size="9" fill="#1a1a1a" text-anchor="end">0,00</text>
<text transform="translate(747.80 361.10) scale(0.9 1)" font-size="9" fill="#1a1a1a" text-anchor="end">3362,90</text>
<text transform="translate(807.70 361.10) scale(0.9 1)" font-size="9" fill="#1a1a1a" text-anchor="end">0,00</text>
<text transform="translate(866.30 361.10) scale(0.9 1)" font-size="9" fill="#1a1a1a" text-anchor="end">0,00</text>
<text transform="translate(94.20 375.25) scale(0.87 1)" font-size="9.5" fill="#000" font-weight="bold" stroke="#000" stroke-width="0.25">2.02</text>
<text transform="translate(164.40 375.25) scale(0.875 1)" font-size="9.5" fill="#000" font-weight="bold" stroke="#000" stroke-width="0.25" xml:space="preserve">DESPESAS DE VENDAS</text>
<text transform="translate(331.00 375.40) scale(0.9 1)" font-size="9" fill="#1a1a1a" text-anchor="end">0,00</text>
<text transform="translate(390.60 375.40) scale(0.9 1)" font-size="9" fill="#1a1a1a" text-anchor="end">7152,86</text>
<text transform="translate(450.00 375.40) scale(0.9 1)" font-size="9" fill="#1a1a1a" text-anchor="end">0,00</text>
<text transform="translate(509.70 375.40) scale(0.9 1)" font-size="9" fill="#1a1a1a" text-anchor="end">0,00</text>
<text transform="translate(569.10 375.40) scale(0.9 1)" font-size="9" fill="#1a1a1a" text-anchor="end">0,00</text>
<text transform="translate(629.00 375.40) scale(0.9 1)" font-size="9" fill="#1a1a1a" text-anchor="end">0,00</text>
<text transform="translate(688.70 375.40) scale(0.9 1)" font-size="9" fill="#1a1a1a" text-anchor="end">0,00</text>
<text transform="translate(747.80 375.40) scale(0.9 1)" font-size="9" fill="#1a1a1a" text-anchor="end">7152,86</text>
<text transform="translate(807.70 375.40) scale(0.9 1)" font-size="9" fill="#1a1a1a" text-anchor="end">0,00</text>
<text transform="translate(866.30 375.40) scale(0.9 1)" font-size="9" fill="#1a1a1a" text-anchor="end">0,00</text>
<text transform="translate(94.20 389.25) scale(0.87 1)" font-size="9.5" fill="#000" font-weight="bold" stroke="#000" stroke-width="0.25">2.02.02</text>
<text transform="translate(164.40 389.25) scale(0.875 1)" font-size="9.5" fill="#000" font-weight="bold" stroke="#000" stroke-width="0.25" xml:space="preserve">DESPESAS CONSULTOR</text>
<text transform="translate(331.00 389.40) scale(0.9 1)" font-size="9" fill="#1a1a1a" text-anchor="end">0,00</text>
<text transform="translate(390.60 389.40) scale(0.9 1)" font-size="9" fill="#1a1a1a" text-anchor="end">7152,86</text>
<text transform="translate(450.00 389.40) scale(0.9 1)" font-size="9" fill="#1a1a1a" text-anchor="end">0,00</text>
<text transform="translate(509.70 389.40) scale(0.9 1)" font-size="9" fill="#1a1a1a" text-anchor="end">0,00</text>
<text transform="translate(569.10 389.40) scale(0.9 1)" font-size="9" fill="#1a1a1a" text-anchor="end">0,00</text>
<text transform="translate(629.00 389.40) scale(0.9 1)" font-size="9" fill="#1a1a1a" text-anchor="end">0,00</text>
<text transform="translate(688.70 389.40) scale(0.9 1)" font-size="9" fill="#1a1a1a" text-anchor="end">0,00</text>
<text transform="translate(747.80 389.40) scale(0.9 1)" font-size="9" fill="#1a1a1a" text-anchor="end">7152,86</text>
<text transform="translate(807.70 389.40) scale(0.9 1)" font-size="9" fill="#1a1a1a" text-anchor="end">0,00</text>
<text transform="translate(866.30 389.40) scale(0.9 1)" font-size="9" fill="#1a1a1a" text-anchor="end">0,00</text>
<text transform="translate(94.50 401.40) scale(0.83 1)" font-size="7.5" fill="#111">2.02.02.0003</text>
<text transform="translate(164.40 401.40) scale(0.86 1)" font-size="7.5" fill="#111">REFEIÇÕES</text>
<text transform="translate(331.00 403.20) scale(0.9 1)" font-size="9" fill="#1a1a1a" text-anchor="end">0,00</text>
<text transform="translate(390.60 403.20) scale(0.9 1)" font-size="9" fill="#1a1a1a" text-anchor="end">7152,86</text>
<text transform="translate(450.00 403.20) scale(0.9 1)" font-size="9" fill="#1a1a1a" text-anchor="end">0,00</text>
<text transform="translate(509.70 403.20) scale(0.9 1)" font-size="9" fill="#1a1a1a" text-anchor="end">0,00</text>
<text transform="translate(569.10 403.20) scale(0.9 1)" font-size="9" fill="#1a1a1a" text-anchor="end">0,00</text>
<text transform="translate(629.00 403.20) scale(0.9 1)" font-size="9" fill="#1a1a1a" text-anchor="end">0,00</text>
<text transform="translate(688.70 403.20) scale(0.9 1)" font-size="9" fill="#1a1a1a" text-anchor="end">0,00</text>
<text transform="translate(747.80 403.20) scale(0.9 1)" font-size="9" fill="#1a1a1a" text-anchor="end">7152,86</text>
<text transform="translate(807.70 403.20) scale(0.9 1)" font-size="9" fill="#1a1a1a" text-anchor="end">0,00</text>
<text transform="translate(866.30 403.20) scale(0.9 1)" font-size="9" fill="#1a1a1a" text-anchor="end">0,00</text>
<text transform="translate(94.20 417.35) scale(0.87 1)" font-size="9.5" fill="#000" font-weight="bold" stroke="#000" stroke-width="0.25">2.03</text>
<text transform="translate(164.40 417.35) scale(0.875 1)" font-size="9.5" fill="#000" font-weight="bold" stroke="#000" stroke-width="0.25" xml:space="preserve">DESPESAS</text>
<text transform="translate(331.00 417.50) scale(0.9 1)" font-size="9" fill="#1a1a1a" text-anchor="end">14103,26</text>
<text transform="translate(390.60 417.50) scale(0.9 1)" font-size="9" fill="#1a1a1a" text-anchor="end">29193,11</text>
<text transform="translate(450.00 417.50) scale(0.9 1)" font-size="9" fill="#1a1a1a" text-anchor="end">46883,39</text>
<text transform="translate(509.70 417.50) scale(0.9 1)" font-size="9" fill="#1a1a1a" text-anchor="end">0,00</text>
<text transform="translate(569.10 417.50) scale(0.9 1)" font-size="9" fill="#1a1a1a" text-anchor="end">0,00</text>
<text transform="translate(629.00 417.50) scale(0.9 1)" font-size="9" fill="#1a1a1a" text-anchor="end">0,00</text>
<text transform="translate(688.70 417.50) scale(0.9 1)" font-size="9" fill="#1a1a1a" text-anchor="end">0,00</text>
<text transform="translate(747.80 417.50) scale(0.9 1)" font-size="9" fill="#1a1a1a" text-anchor="end">90179,76</text>
<text transform="translate(807.70 417.50) scale(0.9 1)" font-size="9" fill="#1a1a1a" text-anchor="end">687077,08</text>
<text transform="translate(866.30 417.50) scale(0.9 1)" font-size="9" fill="#1a1a1a" text-anchor="end">74558,02</text>
<text transform="translate(94.20 431.15) scale(0.87 1)" font-size="9.5" fill="#000" font-weight="bold" stroke="#000" stroke-width="0.25">2.03.03</text>
<text transform="translate(164.40 431.15) scale(0.875 1)" font-size="9.5" fill="#000" font-weight="bold" stroke="#000" stroke-width="0.25" xml:space="preserve">FORNECEDORES</text>
<text transform="translate(331.00 431.30) scale(0.9 1)" font-size="9" fill="#1a1a1a" text-anchor="end">14096,11</text>
<text transform="translate(390.60 431.30) scale(0.9 1)" font-size="9" fill="#1a1a1a" text-anchor="end">28862,58</text>
<text transform="translate(450.00 431.30) scale(0.9 1)" font-size="9" fill="#1a1a1a" text-anchor="end">46464,27</text>
<text transform="translate(509.70 431.30) scale(0.9 1)" font-size="9" fill="#1a1a1a" text-anchor="end">0,00</text>
<text transform="translate(569.10 431.30) scale(0.9 1)" font-size="9" fill="#1a1a1a" text-anchor="end">0,00</text>
<text transform="translate(629.00 431.30) scale(0.9 1)" font-size="9" fill="#1a1a1a" text-anchor="end">0,00</text>
<text transform="translate(688.70 431.30) scale(0.9 1)" font-size="9" fill="#1a1a1a" text-anchor="end">0,00</text>
<text transform="translate(747.80 431.30) scale(0.9 1)" font-size="9" fill="#1a1a1a" text-anchor="end">89422,96</text>
<text transform="translate(807.70 431.30) scale(0.9 1)" font-size="9" fill="#1a1a1a" text-anchor="end">686295,96</text>
<text transform="translate(866.30 431.30) scale(0.9 1)" font-size="9" fill="#1a1a1a" text-anchor="end">74558,02</text>
<text transform="translate(94.50 443.50) scale(0.83 1)" font-size="7.5" fill="#111">2.03.03.0001</text>
<text transform="translate(164.40 443.50) scale(0.86 1)" font-size="7.5" fill="#111">REVENDA</text>
<text transform="translate(331.00 445.30) scale(0.9 1)" font-size="9" fill="#1a1a1a" text-anchor="end">0,00</text>
<text transform="translate(390.60 445.30) scale(0.9 1)" font-size="9" fill="#1a1a1a" text-anchor="end">28195,71</text>
<text transform="translate(450.00 445.30) scale(0.9 1)" font-size="9" fill="#1a1a1a" text-anchor="end">46109,73</text>
<text transform="translate(509.70 445.30) scale(0.9 1)" font-size="9" fill="#1a1a1a" text-anchor="end">0,00</text>
<text transform="translate(569.10 445.30) scale(0.9 1)" font-size="9" fill="#1a1a1a" text-anchor="end">0,00</text>
<text transform="translate(629.00 445.30) scale(0.9 1)" font-size="9" fill="#1a1a1a" text-anchor="end">0,00</text>
<text transform="translate(688.70 445.30) scale(0.9 1)" font-size="9" fill="#1a1a1a" text-anchor="end">0,00</text>
<text transform="translate(747.80 445.30) scale(0.9 1)" font-size="9" fill="#1a1a1a" text-anchor="end">74305,44</text>
<text transform="translate(807.70 445.30) scale(0.9 1)" font-size="9" fill="#1a1a1a" text-anchor="end">686261,76</text>
<text transform="translate(866.30 445.30) scale(0.9 1)" font-size="9" fill="#1a1a1a" text-anchor="end">74558,02</text>
<text transform="translate(94.50 457.20) scale(0.83 1)" font-size="7.5" fill="#111">2.03.03.0003</text>
<text transform="translate(164.40 457.20) scale(0.86 1)" font-size="7.5" fill="#111">MATERIAIS ASSISTENCIA</text>
<text transform="translate(331.00 459.00) scale(0.9 1)" font-size="9" fill="#1a1a1a" text-anchor="end">11258,16</text>
<text transform="translate(390.60 459.00) scale(0.9 1)" font-size="9" fill="#1a1a1a" text-anchor="end">666,87</text>
<text transform="translate(450.00 459.00) scale(0.9 1)" font-size="9" fill="#1a1a1a" text-anchor="end">354,54</text>
<text transform="translate(509.70 459.00) scale(0.9 1)" font-size="9" fill="#1a1a1a" text-anchor="end">0,00</text>
<text transform="translate(569.10 459.00) scale(0.9 1)" font-size="9" fill="#1a1a1a" text-anchor="end">0,00</text>
<text transform="translate(629.00 459.00) scale(0.9 1)" font-size="9" fill="#1a1a1a" text-anchor="end">0,00</text>
<text transform="translate(688.70 459.00) scale(0.9 1)" font-size="9" fill="#1a1a1a" text-anchor="end">0,00</text>
<text transform="translate(747.80 459.00) scale(0.9 1)" font-size="9" fill="#1a1a1a" text-anchor="end">12279,57</text>
<text transform="translate(807.70 459.00) scale(0.9 1)" font-size="9" fill="#1a1a1a" text-anchor="end">34,20</text>
<text transform="translate(866.30 459.00) scale(0.9 1)" font-size="9" fill="#1a1a1a" text-anchor="end">0,00</text>
<text transform="translate(94.50 471.30) scale(0.83 1)" font-size="7.5" fill="#111">2.03.03.0004</text>
<text transform="translate(164.40 471.30) scale(0.86 1)" font-size="7.5" fill="#111">SERVIÇOS ASSISTÊNCIA</text>
<text transform="translate(331.00 473.10) scale(0.9 1)" font-size="9" fill="#1a1a1a" text-anchor="end">2837,95</text>
<text transform="translate(390.60 473.10) scale(0.9 1)" font-size="9" fill="#1a1a1a" text-anchor="end">0,00</text>
<text transform="translate(450.00 473.10) scale(0.9 1)" font-size="9" fill="#1a1a1a" text-anchor="end">0,00</text>
<text transform="translate(509.70 473.10) scale(0.9 1)" font-size="9" fill="#1a1a1a" text-anchor="end">0,00</text>
<text transform="translate(569.10 473.10) scale(0.9 1)" font-size="9" fill="#1a1a1a" text-anchor="end">0,00</text>
<text transform="translate(629.00 473.10) scale(0.9 1)" font-size="9" fill="#1a1a1a" text-anchor="end">0,00</text>
<text transform="translate(688.70 473.10) scale(0.9 1)" font-size="9" fill="#1a1a1a" text-anchor="end">0,00</text>
<text transform="translate(747.80 473.10) scale(0.9 1)" font-size="9" fill="#1a1a1a" text-anchor="end">2837,95</text>
<text transform="translate(807.70 473.10) scale(0.9 1)" font-size="9" fill="#1a1a1a" text-anchor="end">0,00</text>
<text transform="translate(866.30 473.10) scale(0.9 1)" font-size="9" fill="#1a1a1a" text-anchor="end">0,00</text>
<text transform="translate(94.20 486.95) scale(0.87 1)" font-size="9.5" fill="#000" font-weight="bold" stroke="#000" stroke-width="0.25">2.03.05</text>
<text transform="translate(164.40 486.95) scale(0.875 1)" font-size="9.5" fill="#000" font-weight="bold" stroke="#000" stroke-width="0.25" xml:space="preserve">FORNECEDORES</text>
<text transform="translate(331.00 487.10) scale(0.9 1)" font-size="9" fill="#1a1a1a" text-anchor="end">0,00</text>
<text transform="translate(390.60 487.10) scale(0.9 1)" font-size="9" fill="#1a1a1a" text-anchor="end">330,53</text>
<text transform="translate(450.00 487.10) scale(0.9 1)" font-size="9" fill="#1a1a1a" text-anchor="end">419,12</text>
<text transform="translate(509.70 487.10) scale(0.9 1)" font-size="9" fill="#1a1a1a" text-anchor="end">0,00</text>
<text transform="translate(569.10 487.10) scale(0.9 1)" font-size="9" fill="#1a1a1a" text-anchor="end">0,00</text>
<text transform="translate(629.00 487.10) scale(0.9 1)" font-size="9" fill="#1a1a1a" text-anchor="end">0,00</text>
<text transform="translate(688.70 487.10) scale(0.9 1)" font-size="9" fill="#1a1a1a" text-anchor="end">0,00</text>
<text transform="translate(747.80 487.10) scale(0.9 1)" font-size="9" fill="#1a1a1a" text-anchor="end">749,65</text>
<text transform="translate(807.70 487.10) scale(0.9 1)" font-size="9" fill="#1a1a1a" text-anchor="end">781,12</text>
<text transform="translate(866.30 487.10) scale(0.9 1)" font-size="9" fill="#1a1a1a" text-anchor="end">0,00</text>
<text transform="translate(94.50 499.30) scale(0.83 1)" font-size="7.5" fill="#111">2.03.05.0009</text>
<text transform="translate(164.40 499.30) scale(0.86 1)" font-size="7.5" fill="#111">PRODUTOS ALIMENTÍCIOS</text>
<text transform="translate(331.00 501.10) scale(0.9 1)" font-size="9" fill="#1a1a1a" text-anchor="end">0,00</text>
<text transform="translate(390.60 501.10) scale(0.9 1)" font-size="9" fill="#1a1a1a" text-anchor="end">330,53</text>
<text transform="translate(450.00 501.10) scale(0.9 1)" font-size="9" fill="#1a1a1a" text-anchor="end">419,12</text>
<text transform="translate(509.70 501.10) scale(0.9 1)" font-size="9" fill="#1a1a1a" text-anchor="end">0,00</text>
<text transform="translate(569.10 501.10) scale(0.9 1)" font-size="9" fill="#1a1a1a" text-anchor="end">0,00</text>
<text transform="translate(629.00 501.10) scale(0.9 1)" font-size="9" fill="#1a1a1a" text-anchor="end">0,00</text>
<text transform="translate(688.70 501.10) scale(0.9 1)" font-size="9" fill="#1a1a1a" text-anchor="end">0,00</text>
<text transform="translate(747.80 501.10) scale(0.9 1)" font-size="9" fill="#1a1a1a" text-anchor="end">749,65</text>
<text transform="translate(807.70 501.10) scale(0.9 1)" font-size="9" fill="#1a1a1a" text-anchor="end">781,12</text>
<text transform="translate(866.30 501.10) scale(0.9 1)" font-size="9" fill="#1a1a1a" text-anchor="end">0,00</text>
<text transform="translate(94.20 514.75) scale(0.87 1)" font-size="9.5" fill="#000" font-weight="bold" stroke="#000" stroke-width="0.25">2.03.09</text>
<text transform="translate(164.40 514.75) scale(0.875 1)" font-size="9.5" fill="#000" font-weight="bold" stroke="#000" stroke-width="0.25" xml:space="preserve">DESPESAS FINANCEIRAS</text>
<text transform="translate(331.00 514.90) scale(0.9 1)" font-size="9" fill="#1a1a1a" text-anchor="end">7,15</text>
<text transform="translate(390.60 514.90) scale(0.9 1)" font-size="9" fill="#1a1a1a" text-anchor="end">0,00</text>
<text transform="translate(450.00 514.90) scale(0.9 1)" font-size="9" fill="#1a1a1a" text-anchor="end">0,00</text>
<text transform="translate(509.70 514.90) scale(0.9 1)" font-size="9" fill="#1a1a1a" text-anchor="end">0,00</text>
<text transform="translate(569.10 514.90) scale(0.9 1)" font-size="9" fill="#1a1a1a" text-anchor="end">0,00</text>
<text transform="translate(629.00 514.90) scale(0.9 1)" font-size="9" fill="#1a1a1a" text-anchor="end">0,00</text>
<text transform="translate(688.70 514.90) scale(0.9 1)" font-size="9" fill="#1a1a1a" text-anchor="end">0,00</text>
<text transform="translate(747.80 514.90) scale(0.9 1)" font-size="9" fill="#1a1a1a" text-anchor="end">7,15</text>
<text transform="translate(807.70 514.90) scale(0.9 1)" font-size="9" fill="#1a1a1a" text-anchor="end">0,00</text>
<text transform="translate(866.30 514.90) scale(0.9 1)" font-size="9" fill="#1a1a1a" text-anchor="end">0,00</text>
<text transform="translate(94.50 527.00) scale(0.83 1)" font-size="7.5" fill="#111">2.03.09.0002</text>
<text transform="translate(164.40 527.00) scale(0.86 1)" font-size="7.5" fill="#111">DESPESAS BANCÁRIAS</text>
<text transform="translate(331.00 528.80) scale(0.9 1)" font-size="9" fill="#1a1a1a" text-anchor="end">7,15</text>
<text transform="translate(390.60 528.80) scale(0.9 1)" font-size="9" fill="#1a1a1a" text-anchor="end">0,00</text>
<text transform="translate(450.00 528.80) scale(0.9 1)" font-size="9" fill="#1a1a1a" text-anchor="end">0,00</text>
<text transform="translate(509.70 528.80) scale(0.9 1)" font-size="9" fill="#1a1a1a" text-anchor="end">0,00</text>
<text transform="translate(569.10 528.80) scale(0.9 1)" font-size="9" fill="#1a1a1a" text-anchor="end">0,00</text>
<text transform="translate(629.00 528.80) scale(0.9 1)" font-size="9" fill="#1a1a1a" text-anchor="end">0,00</text>
<text transform="translate(688.70 528.80) scale(0.9 1)" font-size="9" fill="#1a1a1a" text-anchor="end">0,00</text>
<text transform="translate(747.80 528.80) scale(0.9 1)" font-size="9" fill="#1a1a1a" text-anchor="end">7,15</text>
<text transform="translate(807.70 528.80) scale(0.9 1)" font-size="9" fill="#1a1a1a" text-anchor="end">0,00</text>
<text transform="translate(866.30 528.80) scale(0.9 1)" font-size="9" fill="#1a1a1a" text-anchor="end">0,00</text>
<rect x="273.50" y="296.55" width="595.90" height="0.90" fill="#000"/>
<rect x="273.50" y="309.15" width="595.90" height="1.70" fill="#000"/>
<rect x="273.50" y="322.98" width="595.90" height="1.25" fill="#000"/>
<rect x="273.50" y="336.88" width="595.90" height="1.25" fill="#000"/>
<rect x="273.50" y="350.68" width="595.90" height="1.25" fill="#000"/>
<rect x="273.50" y="364.98" width="595.90" height="1.25" fill="#000"/>
<rect x="273.50" y="378.75" width="595.90" height="1.70" fill="#000"/>
<rect x="273.50" y="392.78" width="595.90" height="1.25" fill="#000"/>
<rect x="273.50" y="407.07" width="595.90" height="1.25" fill="#000"/>
<rect x="273.50" y="421.05" width="595.90" height="0.90" fill="#000"/>
<rect x="273.50" y="434.88" width="595.90" height="1.25" fill="#000"/>
<rect x="273.50" y="448.35" width="595.90" height="1.70" fill="#000"/>
<rect x="273.50" y="462.68" width="595.90" height="1.25" fill="#000"/>
<rect x="273.50" y="476.45" width="595.90" height="1.70" fill="#000"/>
<rect x="273.50" y="490.68" width="595.90" height="1.25" fill="#000"/>
<rect x="273.50" y="504.48" width="595.90" height="1.25" fill="#000"/>
<rect x="273.50" y="518.15" width="595.90" height="1.70" fill="#000"/>
<rect x="273.50" y="532.17" width="595.90" height="1.25" fill="#000"/>
<rect x="273.48" y="296.70" width="1.05" height="235.80" fill="#000"/>
<rect x="333.08" y="296.70" width="1.05" height="235.80" fill="#000"/>
<rect x="392.68" y="296.70" width="1.05" height="235.80" fill="#000"/>
<rect x="452.08" y="296.70" width="1.05" height="235.80" fill="#000"/>
<rect x="511.77" y="296.70" width="1.05" height="235.80" fill="#000"/>
<rect x="571.18" y="296.70" width="1.05" height="235.80" fill="#000"/>
<rect x="631.08" y="296.70" width="1.05" height="235.80" fill="#000"/>
<rect x="690.77" y="296.70" width="1.05" height="235.80" fill="#000"/>
<rect x="749.88" y="296.70" width="1.05" height="235.80" fill="#000"/>
<rect x="809.77" y="296.70" width="1.05" height="235.80" fill="#000"/>
<rect x="868.38" y="296.70" width="1.05" height="235.80" fill="#000"/>
</g>
<rect x="1005.90" y="67.00" width="13.10" height="460.20" fill="#f8f8f8" />
<rect x="1005.90" y="68.30" width="13.10" height="12.10" fill="#f0f0f0" />
<rect x="1005.90" y="79.40" width="13.10" height="1.20" fill="#a8a8a8" />
<path d="M1009.6 76L1012.3 72.2L1015 76Z" fill="#000"/>
<rect x="1005.90" y="80.60" width="13.10" height="20.90" fill="#f6f6f6" />
<rect x="1007.40" y="101.50" width="11.60" height="199.50" fill="#ececec" />
<rect x="1005.90" y="300.60" width="13.10" height="1.20" fill="#8a8a8a" />
<rect x="1007.00" y="514.80" width="11.50" height="11.50" fill="#f0f0f0" />
<path d="M1010.2 519.4H1015.4L1012.8 522.6Z" fill="#000"/>
</g>
<g id="statusbar">
<ellipse cx="13.6" cy="532.8" rx="3.55" ry="3.8" fill="#fff"/>
<path d="M12.1 535.5H15.1V536.6C15.1 537.7 16.6 538.2 19.7 539.9V541.9H7.4V539.9C10.6 538.2 12.1 537.7 12.1 536.6Z" fill="#fff"/>
<text x="21.90" y="538.40" textLength="21.00" lengthAdjust="spacingAndGlyphs" font-size="8.7" fill="#f2f2f2">DEMO</text>
</g>
</svg>
</body></html>
